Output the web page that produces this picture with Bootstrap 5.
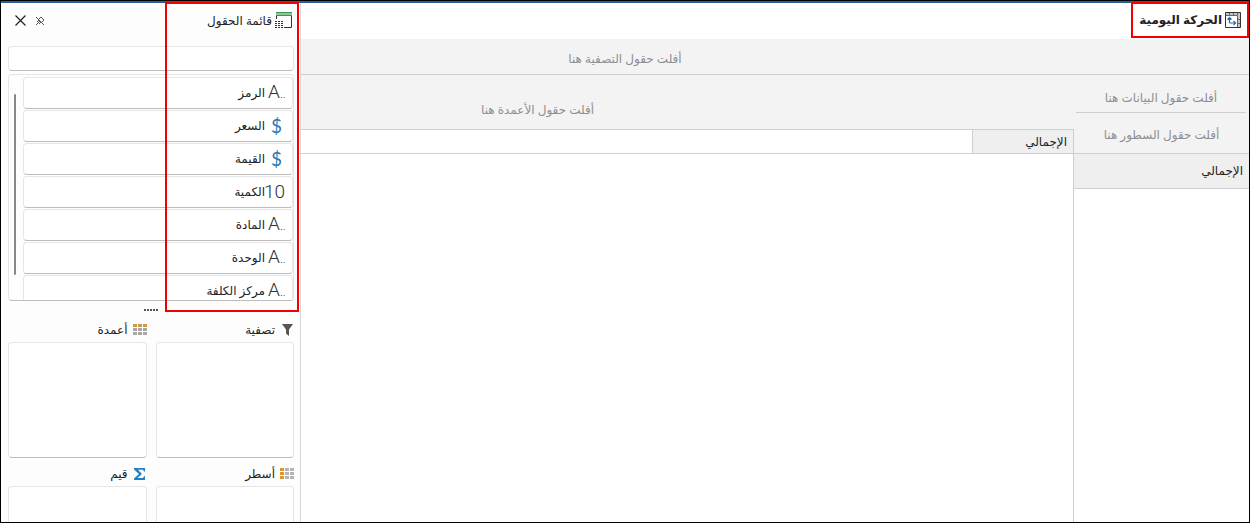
<!DOCTYPE html>
<html lang="ar" dir="rtl">
<head>
<meta charset="utf-8">
<meta name="viewport" content="width=device-width, initial-scale=1">
<title>الحركة اليومية</title>
<link href="https://cdn.jsdelivr.net/npm/bootstrap@5.3.0/dist/css/bootstrap.min.css" rel="stylesheet">
<style>
body { font-family: "Noto Sans", "DejaVu Sans", sans-serif; font-size: 12px; line-height: 18px; color: #222; background: #fff; }
.app { height: 100vh; border: 1px solid #000; }
.accent { height: 2px; background: #2f5c9a; flex: none; }
.titlebar { height: 36px; }
.callout { border: 2px solid #f00000; }
.report-name { margin-top: -1px; padding: 0 6px; height: 36px; font-size: 12px; font-weight: 700; gap: 3px; }
.zone { background: #f3f3f3; color: #8d8f92; }
.line-b { border-bottom: 1px solid #cfcfcf; }
.filter-zone { height: 36px; }
.side { width: 175px; }
.data-zone { height: 38px; margin: 0 3px 0 2px; }
.row-zone { height: 41px; }
.total { background: #efefef; height: 35px; padding: 0 6px; }
.col-zone { height: 55px; }
.totals-row { height: 24px; }
.col-total { width: 101px; background: #efefef; padding: 0 6px; border-left: 1px solid #cfcfcf; }
.edge { border-right: 1px solid #cfcfcf; }
.panel { width: 300px; top: 2px; left: 0; bottom: 0; background: #fdfdfd; border-right: 1px solid #d6d6d6; padding: 0 6px 0 7px; border-radius: 6px 0 0 0; }
.panel-head { height: 43px; padding: 0 2px 8px 4px; }
.panel-title { font-size: 12px; padding: 0 3px; line-height: 18px; }
.tool { border: 0; background: none; padding: 0; width: 16px; height: 16px; display: flex; align-items: center; justify-content: center; }
.box { border: 1px solid #e6e6e6; border-bottom-color: #bdbdbd; border-radius: 4px; background: #fff; }
.search { height: 25px; width: 100%; display: block; outline: none; padding: 0 8px; }
.fields { margin-top: 3px; height: 227px; padding: 2px 0 0 14px; background: #fdfdfd; }
.field { height: 32px; margin-bottom: 1px; padding: 0 7px; gap: 3px; }
.kind { width: 17px; font-family: Roboto, Lato, sans-serif; font-weight: 300; font-size: 19px; line-height: 24px; color: #333; }
.kind small { font-size: 12px; }
.money { color: #2b7ab5; font-family: Lato, sans-serif; font-weight: 400; }
.number { font-family: "Liberation Sans Narrow", Roboto, sans-serif; }
.thumb { width: 2px; height: 181px; left: 5px; top: 19px; background: #888; border-radius: 1px; }
.grip { height: 18px; gap: 1px; }
.grip i { width: 2px; height: 2px; background: #555; }
.areas { display: grid; grid-template-columns: 1fr 1fr; column-gap: 9px; }
.area-name { height: 23px; gap: 5px; padding-bottom: 2px; }
.drop { height: 116px; margin-bottom: 5px; }
.mark-fields { top: 1px; left: 164px; width: 134px; height: 310px; pointer-events: none; }
</style>
</head>
<body>
<div class="app position-relative overflow-hidden d-flex flex-column">
  <div class="accent"></div>
  <main class="flex-grow-1 d-flex flex-column">
    <header class="titlebar d-flex align-items-start">
      <h1 class="report-name callout mb-0 d-flex align-items-center">
        <svg width="16" height="16" viewBox="0 0 16 16" fill="none" aria-hidden="true"><path d="M1 1h14v2.500H1zM12.500 1H15v14h-2.500z" fill="#c4c4c4"/><path d="M.5.5h15v15H.5z" stroke="#333"/><path d="M1 3.500h11.500V15M4.500 1v2M8.500 1v2M12.500 1v2M13 7.500h2M13 11.500h2" stroke="#666"/><path d="M4.500 11V6M2.500 7.500L4.500 5.500l2 2M4.500 11H10M8.500 9L10.500 11l-2 2" stroke="#1f6db0" stroke-width="1.200"/></svg>
        <span>الحركة اليومية</span>
      </h1>
    </header>
    <div class="filter-zone zone line-b d-flex align-items-center justify-content-center pt-1"><span>أفلت حقول التصفية هنا</span></div>
    <div class="d-flex flex-grow-1">
      <section class="side flex-shrink-0">
        <div class="zone">
          <div class="data-zone line-b d-flex align-items-center justify-content-center pt-2"><span>أفلت حقول البيانات هنا</span></div>
          <div class="row-zone line-b d-flex align-items-center justify-content-center pt-1"><span>أفلت حقول السطور هنا</span></div>
        </div>
        <div class="total line-b d-flex align-items-center">الإجمالي</div>
      </section>
      <section class="flex-grow-1 d-flex flex-column">
        <div class="col-zone zone line-b d-flex align-items-center justify-content-center pt-3"><span>أفلت حقول الأعمدة هنا</span></div>
        <div class="totals-row edge line-b d-flex"><div class="col-total d-flex align-items-center">الإجمالي</div></div>
        <div class="edge flex-grow-1"></div>
      </section>
    </div>
  </main>

  <aside class="panel position-absolute overflow-hidden">
    <div class="panel-head d-flex align-items-center">
      <svg width="17" height="17" viewBox="0 0 17 17" fill="none" aria-hidden="true"><path d="M1.500 7V3M16.500 3v12.500H9" stroke="#333"/><path d="M1 .5h16v3H1z" fill="#8bc79b"/><path d="M1 .5h16M1 3.500h16" stroke="#3b9650"/><path d="M0 9.500h8M0 11.500h8M0 13.500h8M0 15.500h8" stroke="#333" stroke-dasharray="2 1"/></svg>
      <h2 class="panel-title mb-0 ms-auto">قائمة الحقول</h2>
      <div class="d-flex align-items-center gap-1 me-auto">
        <button class="tool" type="button" aria-label="تثبيت"><svg width="10" height="10" viewBox="0 0 10 10" fill="none" stroke="#555"><path d="M1 1l8 8M1 9l2.500-2.500M3 4l3 3M4 3l2-2 3 3-2 2M2 5l3 3"/></svg></button>
        <button class="tool" type="button" aria-label="إغلاق"><svg width="11" height="11" viewBox="0 0 11 11" fill="none" stroke="#222" stroke-width="1.200"><path d="M.5.5l10 10M10.500.5l-10 10"/></svg></button>
      </div>
    </div>
    <input class="box search" type="search" aria-label="بحث">
    <div class="fields box position-relative overflow-hidden">
      <div class="thumb position-absolute"></div>
      <div class="field box d-flex align-items-center"><span class="kind" dir="ltr">A<small>..</small></span><span>الرمز</span></div>
      <div class="field box d-flex align-items-center"><span class="kind money text-center">$</span><span>السعر</span></div>
      <div class="field box d-flex align-items-center"><span class="kind money text-center">$</span><span>القيمة</span></div>
      <div class="field box d-flex align-items-center"><span class="kind number">10</span><span>الكمية</span></div>
      <div class="field box d-flex align-items-center"><span class="kind" dir="ltr">A<small>..</small></span><span>المادة</span></div>
      <div class="field box d-flex align-items-center"><span class="kind" dir="ltr">A<small>..</small></span><span>الوحدة</span></div>
      <div class="field box d-flex align-items-center"><span class="kind" dir="ltr">A<small>..</small></span><span>مركز الكلفة</span></div>
    </div>
    <div class="grip d-flex align-items-center justify-content-center"><i></i><i></i><i></i><i></i><i></i></div>
    <div class="areas">
      <section>
        <div class="area-name d-flex align-items-center"><svg width="14" height="12" viewBox="0 0 14 12" aria-hidden="true"><path d="M2 0h11L9 5.500V12L6 9.500v-4z" fill="#555"/></svg><span>تصفية</span></div>
        <div class="box drop"></div>
      </section>
      <section>
        <div class="area-name d-flex align-items-center"><svg width="14" height="12" viewBox="0 0 14 12" aria-hidden="true"><path d="M0 0h4v3H0zM5 0h4v3H5zM10 0h4v3h-4z" fill="#d09a45"/><path d="M0 4h4v3H0zM5 4h4v3H5zM10 4h4v3h-4zM0 8h4v3H0zM5 8h4v3H5zM10 8h4v3h-4z" fill="#aaa5a5"/></svg><span>أعمدة</span></div>
        <div class="box drop"></div>
      </section>
      <section>
        <div class="area-name d-flex align-items-center"><svg width="14" height="12" viewBox="0 0 14 12" aria-hidden="true"><path d="M0 0h4v3H0zM0 4h4v3H0zM0 8h4v3H0z" fill="#dd952f"/><path d="M5 0h4v3H5zM10 0h4v3h-4zM5 4h4v3H5zM10 4h4v3h-4zM5 8h4v3H5zM10 8h4v3h-4z" fill="#b5b5b5"/></svg><span>أسطر</span></div>
        <div class="box drop"></div>
      </section>
      <section>
        <div class="area-name d-flex align-items-center"><svg width="14" height="12" viewBox="0 0 14 12" aria-hidden="true"><path d="M1 0h11v3.500h-1L10 1.800H5L9 6l-4.500 4H10l1-1.700h1V12H1v-1.500L6 6 1 1.500z" fill="#2180c3"/></svg><span>قيم</span></div>
        <div class="box drop"></div>
      </section>
    </div>
  </aside>
  <div class="mark-fields callout position-absolute"></div>
</div>
<script src="https://cdn.jsdelivr.net/npm/bootstrap@5.3.0/dist/js/bootstrap.bundle.min.js"></script>
</body>
</html>
